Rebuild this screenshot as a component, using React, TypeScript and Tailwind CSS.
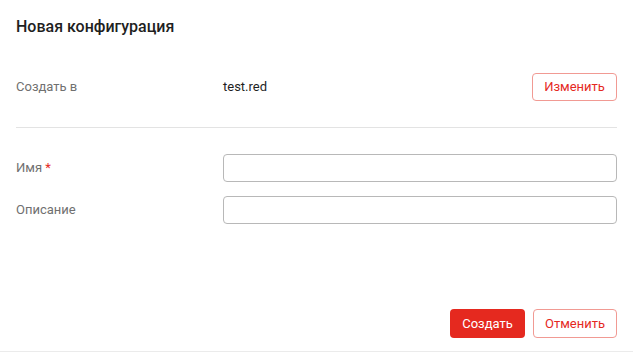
export default function App() {
  return (
    <div className="w-[633px] h-[353px] bg-white font-['Roboto',sans-serif] text-[13px] text-[#1f1f1f]">
      <div className="flex flex-col h-[352px] border-b border-[#ebebeb] px-4">
        <h1 className="pt-[15px] text-[16px] leading-6 font-medium text-[#1f1f1f]">Новая конфигурация</h1>

        <div className="mt-[34px] flex items-center h-[28px]">
          <span className="w-[207px] text-[#707070]">Создать в</span>
          <span className="flex-1 text-[#1f1f1f]">test.red</span>
          <button className="h-[28px] w-[85px] rounded-[4px] border border-[#f19a93] text-[#e5291f]">Изменить</button>
        </div>

        <div className="mt-[26px] border-t border-[#e3e3e3]" />

        <div className="mt-[26px] flex flex-col gap-[14px]">
          <div className="flex items-center">
            <label className="w-[207px] text-[#707070]">
              Имя <span className="text-[#e5291f]">*</span>
            </label>
            <input className="flex-1 h-[28px] rounded-[4px] border border-[#b8b8b8] px-2 outline-none" />
          </div>
          <div className="flex items-center">
            <label className="w-[207px] text-[#707070]">Описание</label>
            <input className="flex-1 h-[28px] rounded-[4px] border border-[#b8b8b8] px-2 outline-none" />
          </div>
        </div>

        <div className="mt-auto mb-[13px] flex justify-end gap-2">
          <button className="h-[29px] w-[75px] rounded-[4px] bg-[#e5291f] text-white">Создать</button>
          <button className="h-[29px] w-[84px] rounded-[4px] border border-[#f19a93] text-[#e5291f]">Отменить</button>
        </div>
      </div>
    </div>
  );
}
